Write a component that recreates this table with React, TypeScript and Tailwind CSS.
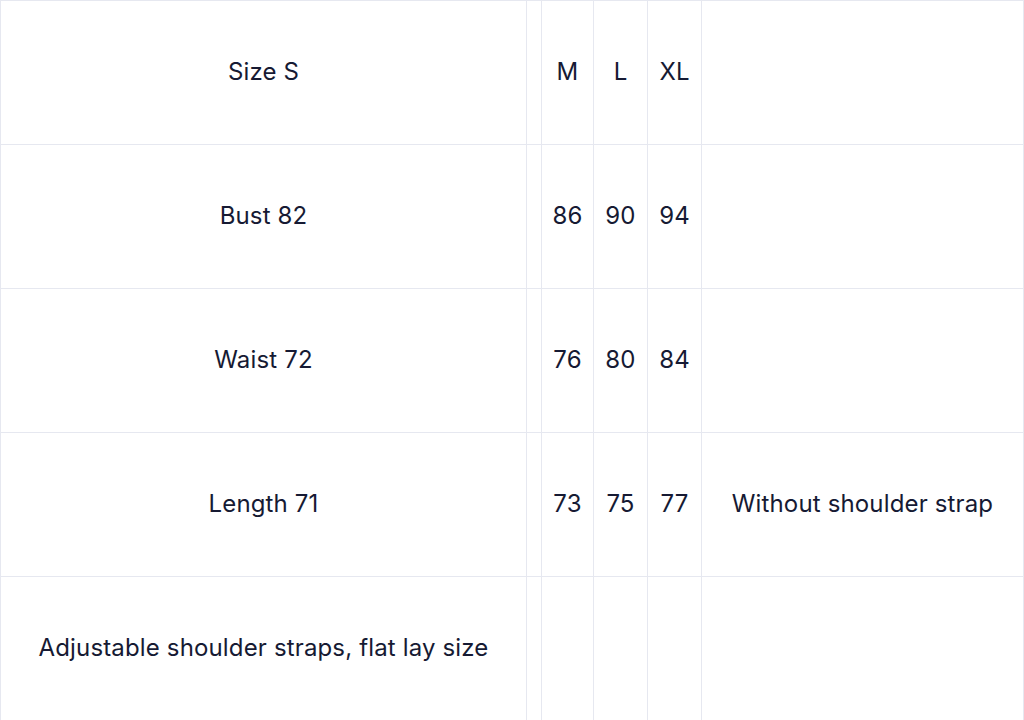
import React from "react";

const rows: string[][] = [
  ["Size S", "", "M", "L", "XL", ""],
  ["Bust 82", "", "86", "90", "94", ""],
  ["Waist 72", "", "76", "80", "84", ""],
  ["Length 71", "", "73", "75", "77", "Without shoulder strap"],
  ["Adjustable shoulder straps, flat lay size", "", "", "", "", ""],
];

export default function App() {
  return (
    <div
      className="w-[1024px] h-[720px] bg-white overflow-hidden grid grid-cols-[526px_15px_52px_54px_54px_323px] grid-rows-[repeat(5,144px)] text-[#161a33] text-[24px]"
      style={{ fontFamily: "Inter, 'Noto Sans', sans-serif" }}
    >
      {rows.map((r, i) =>
        r.map((c, j) => (
          <div
            key={`${i}-${j}`}
            className={`flex items-center justify-center pb-[2px] border-t border-l border-[#e6e8f0] whitespace-nowrap tracking-[0.15px] ${j === 5 ? "border-r" : ""}`}
          >
            {c}
          </div>
        ))
      )}
    </div>
  );
}
